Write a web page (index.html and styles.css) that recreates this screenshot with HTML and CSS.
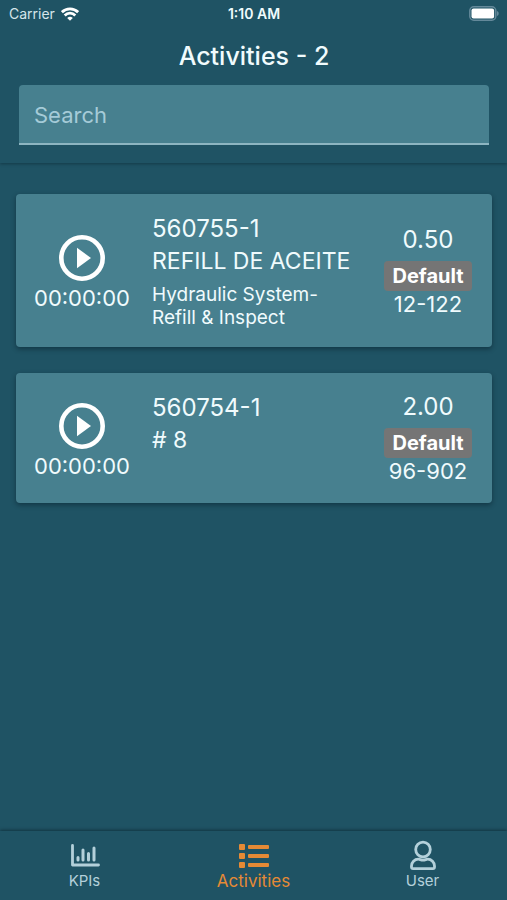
FILE: index.html
```html
<!DOCTYPE html>
<html lang="en">
<head>
<meta charset="utf-8">
<meta name="viewport" content="width=device-width, initial-scale=1">
<title>Activities</title>
<link rel="stylesheet" href="styles.css">
</head>
<body>
<header class="header">
  <div class="status">
    <span class="carrier">Carrier
      <svg class="wifi" width="18" height="14" viewBox="0 0 18 14" fill="none" stroke="currentColor" stroke-width="2.800"><path d="M.9 5.200a11.500 11.500 0 0 1 16.200 0M3.700 8.400a7.500 7.500 0 0 1 10.600 0"/><path d="M9 13.800 6.200 11a4 4 0 0 1 5.600 0z" fill="currentColor" stroke="none"/></svg>
    </span>
    <span class="clock">1:10 AM</span>
    <svg class="battery" width="31" height="15" viewBox="0 0 31 15"><rect x="1.800" y=".8" width="26" height="13.400" rx="4" fill="none" stroke="#64899a" stroke-width="1.500"/><rect x="3.500" y="2.500" width="22.600" height="10" rx="2" fill="#fff"/><path d="M29 5v5c1.300-.6 1.700-1.500 1.700-2.500S30.300 5.600 29 5z" fill="#64899a"/></svg>
  </div>
  <h1 class="title">Activities - 2</h1>
  <input class="search" type="search" placeholder="Search" aria-label="Search">
</header>

<main class="list">
  <article class="card">
    <div class="timer">
      <button class="play" type="button" aria-label="Start 560755-1">
        <svg width="46" height="46" viewBox="0 0 46 46"><circle cx="23" cy="23" r="20.700" fill="none" stroke="currentColor" stroke-width="4.600"/><path d="M18 12.800v20.400L32 23z" fill="currentColor"/></svg>
      </button>
      <span class="time">00:00:00</span>
    </div>
    <div class="info">
      <h2 class="line number">560755-1</h2>
      <p class="line">REFILL DE ACEITE</p>
      <p class="detail">Hydraulic System- Refill &amp; Inspect</p>
    </div>
    <div class="meta">
      <span class="hours">0.50</span>
      <span class="badge">Default</span>
      <span class="code">12-122</span>
    </div>
  </article>
  <article class="card">
    <div class="timer">
      <button class="play" type="button" aria-label="Start 560754-1">
        <svg width="46" height="46" viewBox="0 0 46 46"><circle cx="23" cy="23" r="20.700" fill="none" stroke="currentColor" stroke-width="4.600"/><path d="M18 12.800v20.400L32 23z" fill="currentColor"/></svg>
      </button>
      <span class="time">00:00:00</span>
    </div>
    <div class="info">
      <h2 class="line number">560754-1</h2>
      <p class="line"># 8</p>
      <p class="detail"></p>
    </div>
    <div class="meta">
      <span class="hours">2.00</span>
      <span class="badge">Default</span>
      <span class="code">96-902</span>
    </div>
  </article>
</main>

<nav class="tabs">
  <a class="tab" href="#kpis">
    <svg width="30" height="30" viewBox="0 0 30 30" fill="none" stroke="currentColor" stroke-width="2.800" stroke-linecap="round" stroke-linejoin="round"><path d="M2.500 5.500V25h26"/><path d="M8 17.500v2.500M13 10v10M18.500 13.500V20M24 8v12" stroke-width="3"/></svg>
    KPIs
  </a>
  <a class="tab tab-active" href="#activities" aria-current="page">
    <svg width="30" height="30" viewBox="0 0 30 30" fill="currentColor"><rect y="4" width="6" height="6" rx="1"/><rect y="13" width="6" height="6" rx="1"/><rect y="22" width="6" height="6" rx="1"/><rect x="9" y="5" width="21" height="4" rx="1"/><rect x="9" y="14" width="21" height="4" rx="1"/><rect x="9" y="23" width="21" height="4" rx="1"/></svg>
    Activities
  </a>
  <a class="tab" href="#user">
    <svg width="30" height="30" viewBox="0 0 30 30" fill="none" stroke="currentColor" stroke-width="2.800" stroke-linejoin="round"><circle cx="15" cy="9.500" r="7.300"/><path d="M10.300 19.200c1.700 0 2.400.9 4.700.9s3-.9 4.700-.9a6.800 6.800 0 0 1 6.800 6.800v1a1.600 1.600 0 0 1-1.600 1.600H5.100A1.600 1.600 0 0 1 3.500 27v-1a6.800 6.800 0 0 1 6.800-6.800z"/></svg>
    User
  </a>
</nav>
</body>
</html>
```
FILE: styles.css
```css
* {
  box-sizing: border-box;
}

body {
  margin: 0;
  min-height: 100vh;
  display: flex;
  flex-direction: column;
  background: #1f5364;
  color: #f0fbfd;
  font-family: Inter, "Liberation Sans", sans-serif;
}

h1, h2, p {
  margin: 0;
  font-weight: 400;
}

.header {
  padding: 0 18px 18px 19px;
  box-shadow: 0 1px 3px rgba(0, 20, 30, 0.4);
}

.status {
  display: grid;
  grid-template-columns: 1fr auto 1fr;
  align-items: center;
  height: 27px;
  margin: 0 -10px;
  font-size: 14px;
}

.carrier {
  display: flex;
  align-items: center;
  gap: 6px;
  color: #d5e5ea;
}

.wifi {
  color: #fff;
}

.clock {
  font-weight: 600;
}

.battery {
  justify-self: end;
}

.title {
  padding: 14px 0;
  font-size: 25px;
  font-weight: 500;
  line-height: 30px;
  text-align: center;
}

.search {
  display: block;
  width: 100%;
  height: 60px;
  padding: 2px 15px 0;
  border: 0;
  border-bottom: 2px solid #8db5c1;
  border-radius: 4px 4px 0 0;
  background: #47808f;
  color: inherit;
  font: inherit;
  font-size: 22px;
  appearance: none;
}

.search::placeholder {
  color: #a5cbd8;
  opacity: 1;
}

.list {
  flex: 1;
  display: flex;
  flex-direction: column;
  gap: 26px;
  padding: 31px 15px 31px 16px;
}

.card {
  display: grid;
  grid-template-columns: 132px 1fr 128px;
  align-items: center;
  border-radius: 4px;
  background: #47808f;
  box-shadow: 0 2px 5px rgba(0, 20, 30, 0.45);
}

.timer {
  display: flex;
  flex-direction: column;
  align-items: center;
  gap: 5px;
  padding-top: 5px;
}

.play {
  display: flex;
  padding: 0;
  border: 0;
  background: none;
  color: #fff;
}

.time {
  font-size: 22px;
  line-height: 25px;
}

.info {
  padding: 18px 0 18px 4px;
}

.line {
  font-size: 23px;
  line-height: 33px;
}

.number {
  font-size: 24px;
}

.detail {
  min-height: 23px;
  margin-top: 5px;
  font-size: 19px;
  line-height: 23px;
}

.meta {
  display: flex;
  flex-direction: column;
  align-items: center;
}

.hours {
  margin-bottom: 6px;
  font-size: 24px;
  line-height: 30px;
}

.badge {
  padding: 0 8px;
  border-radius: 4px;
  background: #757575;
  color: #fff;
  font-size: 20px;
  font-weight: 700;
  line-height: 30px;
}

.code {
  font-size: 22px;
  line-height: 26px;
}

.tabs {
  display: grid;
  grid-template-columns: repeat(3, 1fr);
  box-shadow: 0 -1px 3px rgba(0, 20, 30, 0.5);
}

.tab {
  display: flex;
  flex-direction: column;
  align-items: center;
  gap: 1px;
  padding: 9px 0;
  color: #b3d0da;
  font-size: 15px;
  line-height: 20px;
  text-decoration: none;
}

.tab-active {
  color: #e58a35;
  font-size: 17px;
}
```
